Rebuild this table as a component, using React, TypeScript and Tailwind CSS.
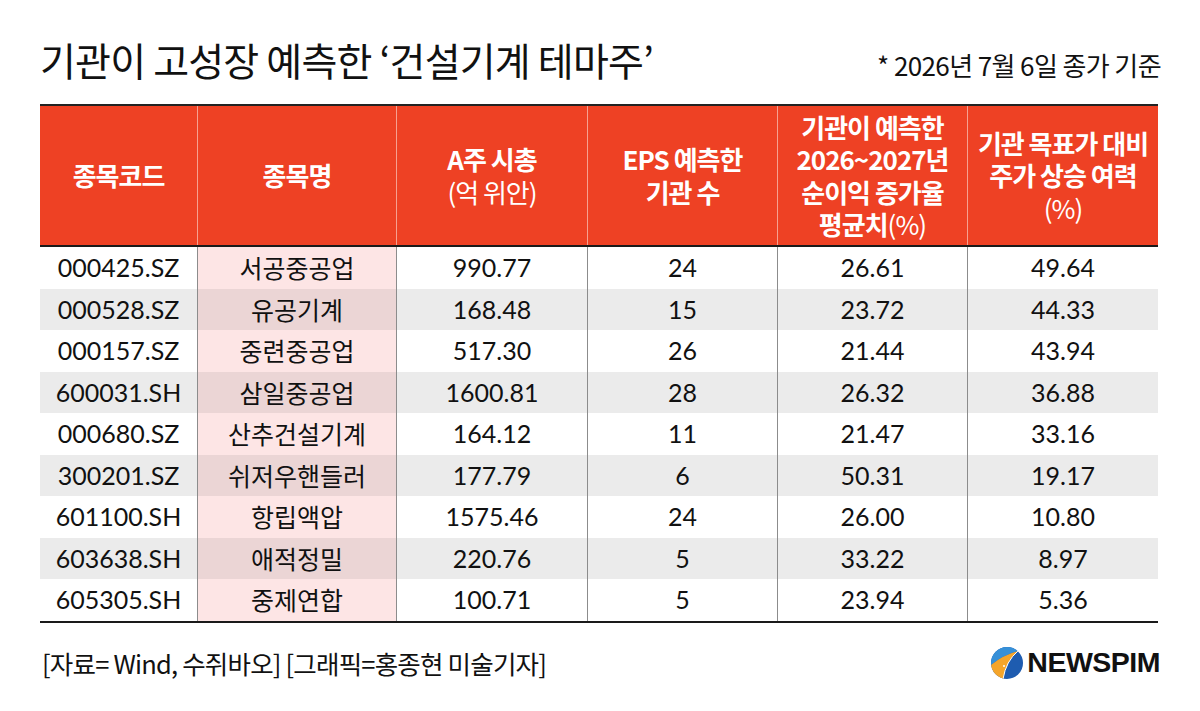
import React from "react"

const rows = [
  ["000425.SZ", "서공중공업", "990.77", "24", "26.61", "49.64"],
  ["000528.SZ", "유공기계", "168.48", "15", "23.72", "44.33"],
  ["000157.SZ", "중련중공업", "517.30", "26", "21.44", "43.94"],
  ["600031.SH", "삼일중공업", "1600.81", "28", "26.32", "36.88"],
  ["000680.SZ", "산추건설기계", "164.12", "11", "21.47", "33.16"],
  ["300201.SZ", "쉬저우핸들러", "177.79", "6", "50.31", "19.17"],
  ["601100.SH", "항립액압", "1575.46", "24", "26.00", "10.80"],
  ["603638.SH", "애적정밀", "220.76", "5", "33.22", "8.97"],
  ["605305.SH", "중제연합", "100.71", "5", "23.94", "5.36"],
]

function Logo() {
  return (
    <svg width="32" height="32" viewBox="0 0 32 32">
      <defs>
        <clipPath id="logoClip">
          <circle cx="16" cy="16" r="16" />
        </clipPath>
      </defs>
      <g clipPath="url(#logoClip)">
        <rect width="32" height="32" fill="#1E5CB0" />
        <path d="M0 0 H28 L27 4 Q12 8 0 18 Z" fill="#3690D8" />
        <path d="M0 18 Q12 8 27 4 Q15 14 12 32 H0 Z" fill="#F5A52A" />
        <path d="M27 4 Q15 14 12 32" stroke="#fff" strokeWidth="1" fill="none" />
        <circle cx="13" cy="19" r="1" fill="#fff" />
      </g>
    </svg>
  )
}

export default function App() {
  return (
    <div className="w-[1200px] h-[711px] bg-white text-[#111] font-['Noto_Sans_CJK_KR',sans-serif] px-[40px] overflow-hidden">
      {/* title */}
      <div className="flex items-baseline justify-between pt-[34px] h-[104px]">
        <h1 className="text-[39px] leading-[50px] tracking-[-0.8px] font-normal">
          기관이 고성장 예측한 ‘건설기계 테마주’
        </h1>
        <div className="text-[26px] tracking-[-0.6px] mr-[-1px]">* 2026년 7월 6일 종가 기준</div>
      </div>

      {/* table */}
      <div className="w-[1118px] border-t-2 border-[#222]">
        <div className="grid grid-cols-[157px_199px_191px_190px_190px_191px] h-[139px] bg-[#EE4124] text-white font-bold text-[26px] leading-[32.5px] tracking-[-1px] text-center">
          <div className="flex items-center justify-center">종목코드</div>
          <div className="flex items-center justify-center border-l border-[#F6A090]">종목명</div>
          <div className="flex flex-col items-center justify-center border-l border-[#F6A090]">
            <span>A주 시총</span>
            <span className="font-normal">(억 위안)</span>
          </div>
          <div className="flex flex-col items-center justify-center border-l border-[#F6A090]">
            <span>EPS 예측한</span>
            <span>기관 수</span>
          </div>
          <div className="flex flex-col items-center justify-center border-l border-[#F6A090]">
            <span>기관이 예측한</span>
            <span>2026~2027년</span>
            <span>순이익 증가율</span>
            <span>
              평균치<span className="font-normal">(%)</span>
            </span>
          </div>
          <div className="flex flex-col items-center justify-center border-l border-[#F6A090]">
            <span>기관 목표가 대비</span>
            <span>주가 상승 여력</span>
            <span className="font-normal">(%)</span>
          </div>
        </div>
        <div className="border-t-2 border-b-2 border-[#1a1a1a] font-['Lato','Noto_Sans_CJK_KR',sans-serif] text-[25px]">
          {rows.map((row, i) => {
            const gray = i % 2 === 1
            return (
              <div
                key={row[0]}
                className={`grid grid-cols-[157px_199px_191px_190px_190px_191px] h-[41.5px] text-center ${
                  gray ? "bg-[#EBEBEB]" : "bg-white"
                }`}
              >
                {row.map((cell, j) => (
                  <div
                    key={j}
                    className={`flex items-center justify-center ${j > 0 ? "border-l border-[#8C8C8C]" : ""} ${
                      j === 1 ? (gray ? "bg-[#EBD5D5] font-['Noto_Sans_CJK_KR',sans-serif]" : "bg-[#FDE5E5] font-['Noto_Sans_CJK_KR',sans-serif]") : ""
                    }`}
                  >
                    {cell}
                  </div>
                ))}
              </div>
            )
          })}
        </div>
      </div>

      {/* footer */}
      <div className="flex items-center justify-between mt-[21px]">
        <div className="text-[25.5px] tracking-[-0.8px] ml-[2px]">[자료= Wind, 수쥐바오] [그래픽=홍종현 미술기자]</div>
        <div className="flex items-center gap-[4px]">
          <Logo />
          <span className="font-['Liberation_Sans',sans-serif] font-bold text-[28.5px] leading-none tracking-[-0.5px]">
            NEWSPIM
          </span>
        </div>
      </div>
    </div>
  )
}
